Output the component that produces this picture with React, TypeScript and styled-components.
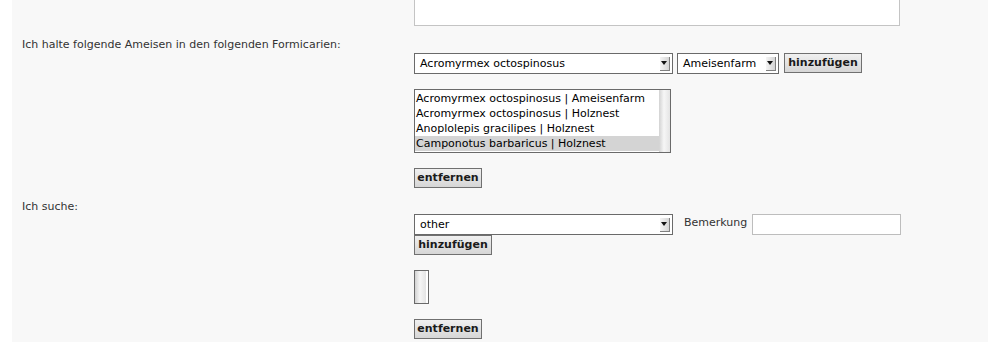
import styled, { createGlobalStyle } from "styled-components";

const GlobalStyle = createGlobalStyle`
  body {
    margin: 0;
    background: #ffffff;
    font-family: "DejaVu Sans", Verdana, sans-serif;
    font-size: 11px;
  }
`;

const Panel = styled.div`
  margin: 0 19px 0 12px;
  padding: 0 0 4px 10px;
  min-height: 342px;
  background: #f8f8f8;
  box-sizing: border-box;
`;

const Label = styled.div<{ $top: number }>`
  margin-top: ${(p) => p.$top}px;
  line-height: 13px;
  color: #333;
`;

const FieldCol = styled.div<{ $top?: number }>`
  margin-left: 392px;
  margin-top: ${(p) => p.$top ?? 0}px;
  display: flex;
  flex-direction: column;
  align-items: flex-start;
`;

const Row = styled.div`
  display: flex;
  align-items: flex-start;
`;

const TextArea = styled.div`
  width: 486px;
  height: 26px;
  box-sizing: border-box;
  background: #fff;
  border: 1px solid #c4c4c4;
  border-top: none;
`;

const Select = styled.div<{ $width: number; $gap?: number }>`
  position: relative;
  width: ${(p) => p.$width}px;
  height: 21px;
  margin-right: ${(p) => p.$gap ?? 0}px;
  box-sizing: border-box;
  border: 1px solid #6a6a6a;
  background: #fff;
  color: #000;
  line-height: 20px;
  padding-left: 5px;
  white-space: nowrap;
`;

const Arrow = styled.span`
  position: absolute;
  right: 2px;
  top: 3px;
  width: 9px;
  height: 13px;
  background: linear-gradient(to right, #f4f4f4, #d4d4d4);
  border-right: 1px solid #808080;
  border-bottom: 1px solid #808080;
  &::after {
    content: "";
    position: absolute;
    left: 1px;
    top: 4px;
    border-left: 3.5px solid transparent;
    border-right: 3.5px solid transparent;
    border-top: 4px solid #111;
  }
`;

const Button = styled.button<{ $width: number; $top?: number }>`
  width: ${(p) => p.$width}px;
  height: 20px;
  margin-top: ${(p) => p.$top ?? 0}px;
  padding: 0;
  box-sizing: border-box;
  border: 1px solid #707070;
  background: linear-gradient(#f0f0f0, #d6d6d6);
  font-family: "DejaVu Sans", Verdana, sans-serif;
  font-size: 11px;
  font-weight: bold;
  color: #1a1a1a;
  line-height: 16px;
`;

const ListBox = styled.div<{ $width: number; $height: number; $top: number }>`
  display: flex;
  width: ${(p) => p.$width}px;
  height: ${(p) => p.$height}px;
  margin-top: ${(p) => p.$top}px;
  box-sizing: border-box;
  border: 1px solid #6a6a6a;
  background: #fff;
`;

const Options = styled.div`
  flex: 1;
  padding: 1px 0;
`;

const Option = styled.div<{ $selected?: boolean }>`
  height: 15px;
  line-height: 15px;
  padding-left: 1px;
  color: #000;
  white-space: nowrap;
  background: ${(p) => (p.$selected ? "#d4d4d4" : "transparent")};
`;

const Track = styled.div`
  width: 11px;
  flex-shrink: 0;
  background: linear-gradient(to right, #d2d2d2, #f6f6f6 45%, #e4e4e4);
`;

const Remark = styled.span`
  margin: 0 5px 0 11px;
  line-height: 17px;
  color: #333;
`;

const Input = styled.div`
  width: 149px;
  height: 21px;
  box-sizing: border-box;
  border: 1px solid #bdbdbd;
  background: #fff;
`;

const entries = [
  "Acromyrmex octospinosus | Ameisenfarm",
  "Acromyrmex octospinosus | Holznest",
  "Anoplolepis gracilipes | Holznest",
  "Camponotus barbaricus | Holznest",
];

export default function App() {
  return (
    <>
      <GlobalStyle />
      <Panel>
        <FieldCol>
          <TextArea />
        </FieldCol>

        <Label $top={12}>Ich halte folgende Ameisen in den folgenden Formicarien:</Label>
        <FieldCol $top={2}>
          <Row>
            <Select $width={259} $gap={4}>
              Acromyrmex octospinosus
              <Arrow />
            </Select>
            <Select $width={102} $gap={5}>
              Ameisenfarm
              <Arrow />
            </Select>
            <Button $width={78}>hinzufügen</Button>
          </Row>
          <ListBox $width={257} $height={64} $top={15}>
            <Options>
              {entries.map((e, i) => (
                <Option key={e} $selected={i === entries.length - 1}>
                  {e}
                </Option>
              ))}
            </Options>
            <Track />
          </ListBox>
          <Button $width={68} $top={15}>entfernen</Button>
        </FieldCol>

        <Label $top={12}>Ich suche:</Label>
        <FieldCol $top={1}>
          <Row>
            <Select $width={259}>
              other
              <Arrow />
            </Select>
            <Remark>Bemerkung</Remark>
            <Input />
          </Row>
          <Button $width={78}>hinzufügen</Button>
          <ListBox $width={15} $height={34} $top={15}>
            <Track />
          </ListBox>
          <Button $width={68} $top={15}>entfernen</Button>
        </FieldCol>
      </Panel>
    </>
  );
}
